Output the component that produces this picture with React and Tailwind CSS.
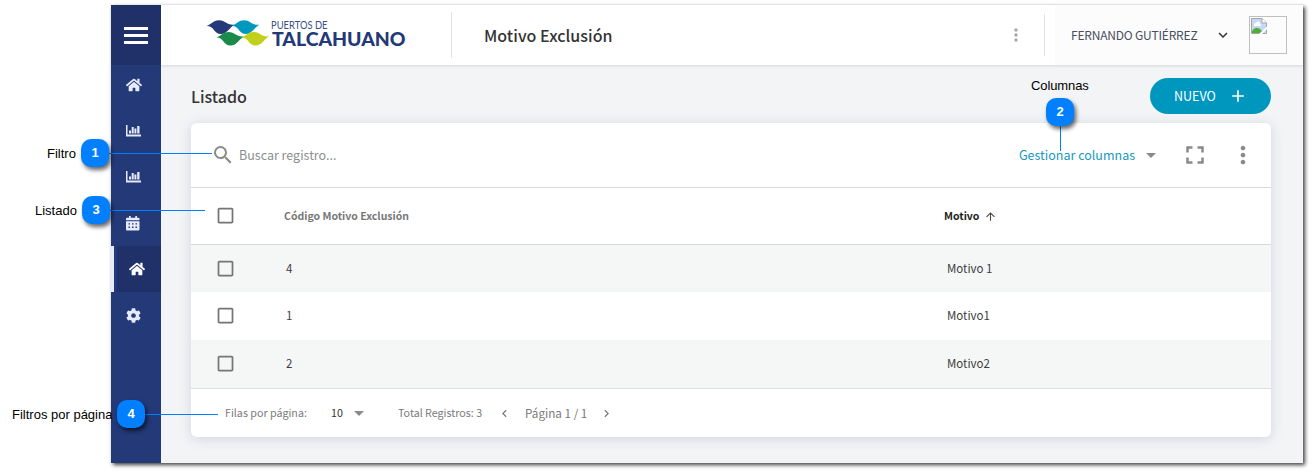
import React from "react";
import { FaHome, FaCog } from "react-icons/fa";
import {
  MdSearch,
  MdArrowDropDown,
  MdFullscreen,
  MdMoreVert,
  MdCheckBoxOutlineBlank,
  MdArrowUpward,
  MdAdd,
  MdKeyboardArrowLeft,
  MdKeyboardArrowRight,
  MdKeyboardArrowDown,
} from "react-icons/md";

function ChartIcon() {
  return (
    <svg width="15" height="12" viewBox="0 0 15 12" fill="currentColor">
      <path d="M0 0H1.500V9.500H15V11.500H0Z" />
      <path d="M3 5.500H5V8.500H3ZM5.700 2H7.700V8.500H5.700ZM8.400 3.500H10.400V8.500H8.400ZM11.200 1H13.500V8.500H11.200Z" />
    </svg>
  );
}

function CalendarIcon() {
  return (
    <svg width="14" height="15" viewBox="0 0 14 15" fill="currentColor">
      <path d="M3 0H4.700V1.700H9.300V0H11V1.700H12.500Q13.500 1.700 13.500 2.700V4.300H0V2.700Q0 1.700 1 1.700H3Z" />
      <path
        fillRule="evenodd"
        d="M0 5.200H13.500V13.500Q13.500 14.500 12.500 14.500H1Q0 14.500 0 13.500ZM2.500 7.300V8.600H4V7.300ZM6 7.300V8.600H7.500V7.300ZM9.500 7.300V8.600H11V7.300ZM2.500 10.600V11.900H4V10.600ZM6 10.600V11.900H7.500V10.600ZM9.500 10.600V11.900H11V10.600Z"
      />
    </svg>
  );
}

const navItems = [
  { icon: FaHome },
  { icon: ChartIcon },
  { icon: ChartIcon },
  { icon: CalendarIcon },
  { icon: FaHome, active: true },
  { icon: FaCog },
];

const rows = [
  { code: "4", motivo: "Motivo 1", style: "h-[47px] bg-[#f5f7f7]", text: "" },
  { code: "1", motivo: "Motivo1", style: "h-[48px] bg-white pb-[2px]", text: "pt-[2px]" },
  { code: "2", motivo: "Motivo2", style: "h-[48px] bg-[#f5f7f7] pb-[2px]", text: "pt-[2px]" },
];

function Sidebar() {
  return (
    <aside className="flex w-[50px] shrink-0 flex-col bg-[#233978]">
      <button className="z-10 flex h-[60px] shrink-0 flex-col items-center justify-center gap-[4px] bg-[#203169]">
        <span className="h-[3px] w-6 bg-white" />
        <span className="h-[3px] w-6 bg-white" />
        <span className="h-[3px] w-6 bg-white" />
      </button>
      <nav className="-mt-[3px] flex flex-col">
        {navItems.map(({ icon: Icon, active }, i) =>
          active ? (
            <a key={i} className="flex h-[46px] border-l-[3px] border-[#e6ecfb] pl-[3px]">
              <span className="flex flex-1 items-center bg-[#203169] pl-[12px] text-white">
                <Icon size={16} />
              </span>
            </a>
          ) : (
            <a key={i} className="flex h-[46px] items-center pl-[15px] text-[#e6ecfb]">
              <Icon size={i === 0 ? 16 : 15} />
            </a>
          )
        )}
      </nav>
    </aside>
  );
}

const wave = "M-0.500 6C3 5.500 6 0.300 12 0.300C19 0.300 19 5.500 27.500 4.800C23 6.500 20.500 14 14 14C6.500 14 7.500 5.800 -0.500 6Z";

function Logo() {
  return (
    <svg width="202" height="30" viewBox="0 0 202 30" className="shrink-0 overflow-visible">
      <path d={wave} fill="#233978" />
      <path d={wave} transform="translate(25 0)" fill="#0097bf" />
      <path d={wave} transform="translate(9.500 11.600)" fill="#1a8a4b" />
      <path d={wave} transform="translate(34.500 11.600)" fill="#c1d11b" />
      <text x="64" y="8.500" fontFamily="Lato, sans-serif" fontSize="10.500" fill="#3c4e88" textLength="56.500" lengthAdjust="spacingAndGlyphs">PUERTOS DE</text>
      <text x="65" y="25.500" fontFamily="Lato, sans-serif" fontWeight="900" fontSize="18.500" fill="#233978" textLength="133.500" lengthAdjust="spacingAndGlyphs">TALCAHUANO</text>
    </svg>
  );
}

function BrokenImage() {
  return (
    <span className="flex h-[38px] w-[38px] border border-[#c0c0c0] p-px">
      <svg width="16" height="16" viewBox="0 0 16 16">
        <path d="M0.500 0.500H11L15.500 5V15.500H0.500Z" fill="#c5d8f6" stroke="#a6a6a6" />
        <path d="M3 7a2 2 0 0 1 2-2 2 2 0 0 1 4 1 1 1 0 0 1 0 2H3Z" fill="#fff" />
        <path d="M1 15V13C4 9 7 9 10 12L12 15Z" fill="#53ad3d" />
        <path d="M11 0.500V5H15.500" fill="#fff" stroke="#a6a6a6" />
        <path d="M16 8.500L8 16H11L16 11Z" fill="#fff" />
      </svg>
    </span>
  );
}

function Header() {
  return (
    <header className="flex h-[60px] shrink-0 items-center bg-white pl-[46px] shadow-[0_1px_3px_rgba(0,0,0,0.12)]">
      <Logo />
      <span className="ml-[42px] h-[46px] w-px bg-[#e2e4e6]" />
      <h1 className="ml-[32px] flex-1 whitespace-nowrap text-[16px] leading-6 font-medium tracking-[0.05px] text-[#333]">Motivo Exclusión</h1>
      <MdMoreVert size={20} className="text-[#a9a9a9]" />
      <span className="ml-[18px] h-[42px] w-px bg-[#e2e4e6]" />
      <div className="ml-[10px] flex h-full w-[248px] items-center bg-[#fcfcfc] pl-4">
        <span className="w-[143px] whitespace-nowrap text-[12px] tracking-[-0.2px] text-[#484e5c]">FERNANDO GUTIÉRREZ</span>
        <MdKeyboardArrowDown size={18} className="mr-[17px] text-[#333]" />
        <BrokenImage />
      </div>
    </header>
  );
}

function Toolbar() {
  return (
    <div className="flex h-[65px] items-center border-b border-[#d5dadb] pl-[20px] text-[#8a8a8a]">
      <MdSearch size={24} />
      <span className="ml-1 flex-1 text-[12.500px] text-[#8a8f90]">Buscar registro...</span>
      <span className="w-[120px] whitespace-nowrap text-[12.500px] text-[#1699bd]">Gestionar columnas</span>
      <MdArrowDropDown size={24} />
      <MdFullscreen size={30} className="ml-[17px]" />
      <MdMoreVert size={28} className="mr-[14px] ml-[19px]" />
    </div>
  );
}

function Table() {
  return (
    <section className="flex h-[314px] flex-col overflow-hidden rounded-[6px] bg-white">
      <Toolbar />
      <div className="flex h-[57px] items-center border-b border-[#d5dadb] pb-px pl-[24px]">
        <MdCheckBoxOutlineBlank size={21} className="text-[#757575]" />
        <span className="ml-[48px] w-[660px] text-[10.500px] font-bold text-[#777]">Código Motivo Exclusión</span>
        <span className="text-[10.500px] font-bold text-[#222]">Motivo</span>
        <MdArrowUpward size={13} className="mt-px ml-[5px] text-[#444]" />
      </div>
      {rows.map((r) => (
        <div key={r.code} className={"flex items-center pl-[24px] text-[11.500px] text-[#3c3c3c] " + r.style}>
          <MdCheckBoxOutlineBlank size={21} className="text-[#757575]" />
          <span className={"ml-[50px] w-[661px] " + r.text}>{r.code}</span>
          <span className={r.text}>{r.motivo}</span>
        </div>
      ))}
      <div className="flex flex-1 items-center border-t border-[#dcdfe0] pl-[34px] text-[10.700px] text-[#7a7a7a]">
        <span className="w-[106px] pt-px">Filas por página:</span>
        <span className="w-[16px] text-[#333]">10</span>
        <MdArrowDropDown size={24} className="text-[#8a8a8a]" />
        <span className="ml-[27px] w-[99px] pt-px">Total Registros: 3</span>
        <MdKeyboardArrowLeft size={15} />
        <span className="ml-[13px] w-[74px] text-[11.700px]">Página 1 / 1</span>
        <MdKeyboardArrowRight size={15} />
      </div>
    </section>
  );
}

function Badge({ children, className }) {
  return (
    <span
      className={
        "absolute flex h-7 w-7 items-center justify-center rounded-[10px] bg-[#007fff] font-['Liberation_Sans',sans-serif] text-[13px] font-bold text-white shadow-[2px_3px_4px_rgba(0,0,0,0.6)] " +
        className
      }
    >
      {children}
    </span>
  );
}

function Callouts() {
  return (
    <div className="font-['Liberation_Sans',sans-serif] text-[13px] leading-4 whitespace-nowrap text-black">
      <span className="absolute top-[146px] left-[47px]">Filtro</span>
      <span className="absolute top-[153px] left-[109px] h-px w-[103px] bg-[#007fff]" />
      <Badge className="top-[139px] left-[81px]">1</Badge>
      <span className="absolute top-[203px] left-[35px]">Listado</span>
      <span className="absolute top-[210px] left-[110px] h-px w-[95px] bg-[#007fff]" />
      <Badge className="top-[196px] left-[82px]">3</Badge>
      <span className="absolute top-[78px] left-[1031px] tracking-[-0.1px]">Columnas</span>
      <span className="absolute top-[126px] left-[1060px] h-[25px] w-px bg-[#007fff]" />
      <Badge className="top-[98px] left-[1046px]">2</Badge>
      <span className="absolute top-[407px] left-[12px]">Filtros por página</span>
      <span className="absolute top-[414px] left-[145px] h-px w-[73px] bg-[#007fff]" />
      <Badge className="top-[400px] left-[117px]">4</Badge>
    </div>
  );
}

export default function App() {
  return (
    <div className="relative h-[472px] w-[1312px] overflow-hidden bg-white pt-[5px] pl-[111px] font-['Noto_Sans_CJK_SC',sans-serif]">
      <div className="flex h-[458px] w-[1192px] bg-[#f3f4f6] shadow-[2px_2px_4px_rgba(0,0,0,0.75)]">
        <Sidebar />
        <div className="flex flex-1 flex-col">
          <Header />
          <main className="flex flex-1 flex-col pr-[32px] pl-[30px]">
            <div className="flex h-[58px] items-center justify-between pt-[3px]">
              <h2 className="text-[16px] font-medium text-[#333]">Listado</h2>
              <button className="flex h-9 w-[121px] items-center rounded-full bg-[#0097bf] pl-[24px] text-left text-[12.500px] text-white">
                <span className="w-[54px] pt-px">NUEVO</span>
                <MdAdd size={20} />
              </button>
            </div>
            <div className="rounded-[6px] shadow-[0_2px_12px_rgba(100,120,170,0.25)]">
              <Table />
            </div>
          </main>
        </div>
      </div>
      <Callouts />
    </div>
  );
}
